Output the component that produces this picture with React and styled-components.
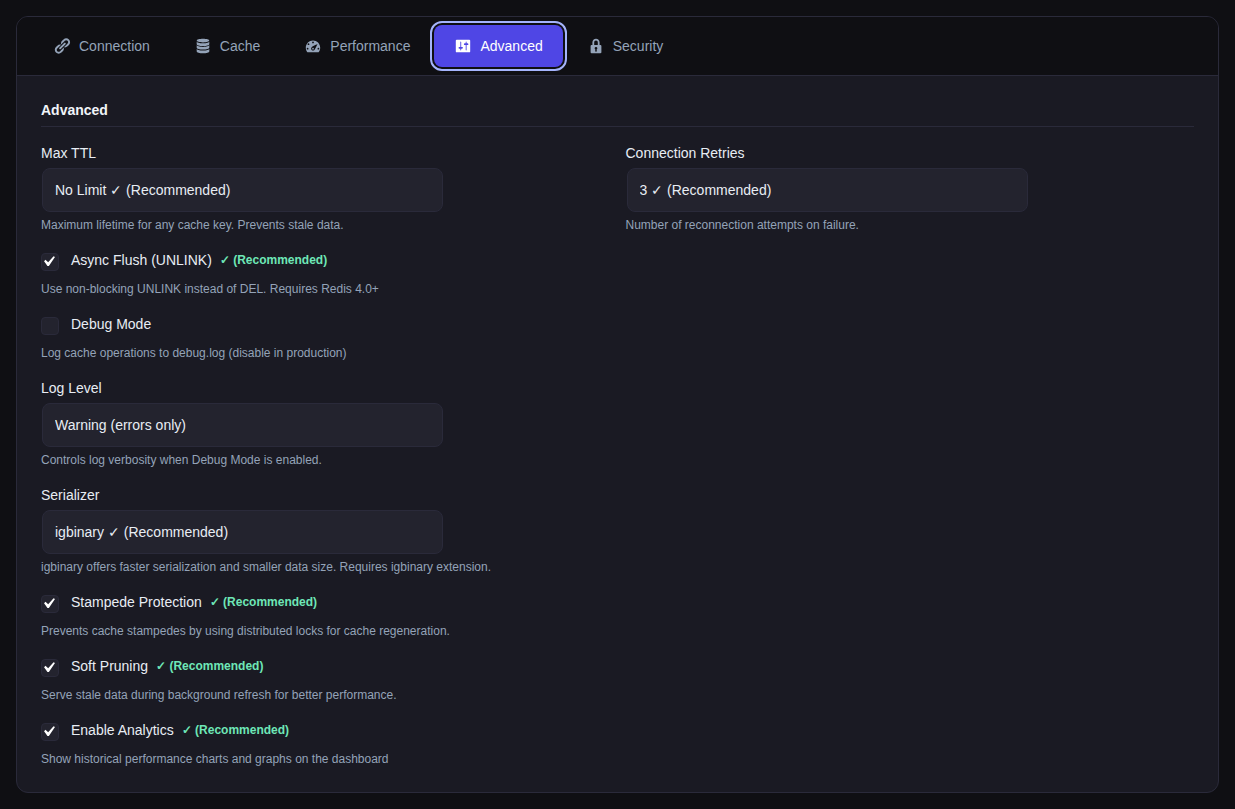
import React, { Fragment, useState } from "react";
import styled, { createGlobalStyle } from "styled-components";

const GlobalStyle = createGlobalStyle`
  * {
    box-sizing: border-box;
  }

  body {
    margin: 0;
    background: #0f0f13;
    color: #e8edf4;
    font-family: "Liberation Sans", Arial, sans-serif;
    font-size: 14px;
    line-height: 20px;
  }
`;

const Card = styled.main`
  margin: 16px;
  background: #1a1a23;
  border: 1px solid #2a2a3a;
  border-radius: 12px;
  overflow: hidden;
`;

const Nav = styled.nav`
  display: flex;
  flex-wrap: wrap;
  gap: 4px;
  padding: 8px 16px;
  background: #0f0f13;
  border-bottom: 1px solid #2a2a3a;
`;

const Tab = styled.button`
  display: inline-flex;
  align-items: center;
  gap: 8px;
  height: 42px;
  padding: 0 20px;
  border: 0;
  border-radius: 8px;
  background: ${({ $active }) => ($active ? "#4f46e5" : "transparent")};
  color: ${({ $active }) => ($active ? "#ffffff" : "#94a3b8")};
  outline: ${({ $active }) => ($active ? "2px solid #a5b4fc" : "none")};
  outline-offset: 2px;
  font: inherit;
  cursor: pointer;
`;

const TabIcon = styled.svg`
  width: 18px;
  height: 18px;
  flex: none;
  fill: currentColor;
`;

const Panel = styled.section`
  padding: 24px;
`;

const Title = styled.h2`
  margin: 0 0 16px;
  padding-bottom: 6px;
  border-bottom: 1px solid #2a2a3a;
  color: #f1f5f9;
  font-size: 14px;
  font-weight: 700;
`;

const Fields = styled.div`
  display: grid;
  grid-template-columns: 1fr 1fr;
  gap: 16px;

  @media (max-width: 768px) {
    grid-template-columns: 1fr;
  }
`;

const Field = styled.div`
  grid-column-start: ${({ $second }) => ($second ? "auto" : "1")};
`;

const Label = styled.label`
  display: block;
`;

const Select = styled.select`
  appearance: none;
  display: block;
  width: 100%;
  max-width: 401px;
  height: 44px;
  margin: 5px 1px 4px;
  padding: 0 12px;
  border: 1px solid #2a2a3a;
  border-radius: 8px;
  background: #23232e;
  color: #e8edf4;
  font: inherit;
`;

const Help = styled.p`
  margin: 0;
  color: #94a3b8;
  font-size: 12px;
  line-height: 18px;
`;

const CheckRow = styled.label`
  display: flex;
  align-items: flex-start;
  margin-bottom: 9px;
`;

const Checkbox = styled.input`
  appearance: none;
  flex: none;
  width: 18px;
  height: 18px;
  margin: 3px 12px 0 0;
  border: 1px solid #2a2a3a;
  border-radius: 4px;
  background: #23232e;

  &:checked {
    background: #23232e
      url("data:image/svg+xml,%3Csvg xmlns='http://www.w3.org/2000/svg' viewBox='0 0 20 20'%3E%3Cpath d='M14.83 4.89l1.34.94-5.81 8.38H9.02L5.78 9.67l1.34-1.25 2.57 2.4z' fill='%23fff'/%3E%3C/svg%3E")
      -4px -3px / 21px 21px no-repeat;
  }
`;

const Badge = styled.span`
  margin-left: 8px;
  color: #6ee7b7;
  font-size: 12px;
  font-weight: 700;
`;

const tabs = [
  {
    name: "Connection",
    path: "M17.74 2.76c1.68 1.69 1.68 4.41 0 6.1l-1.53 1.52c-1.12 1.12-2.7 1.47-4.14 1.09l2.62-2.61.76-.77.76-.76c.84-.84.84-2.2 0-3.04-.84-.85-2.2-.85-3.04 0l-.77.76-3.38 3.38c-.37-1.44-.02-3.02 1.1-4.14l1.52-1.53c1.69-1.68 4.42-1.68 6.1 0zM8.59 13.43l5.34-5.34c.42-.42.42-1.1 0-1.52-.44-.43-1.13-.39-1.53 0l-5.33 5.34c-.42.42-.42 1.1 0 1.52.44.43 1.13.39 1.52 0zm-.76 2.29l4.14-4.15c.38 1.44.03 3.02-1.09 4.14l-1.52 1.53c-1.69 1.68-4.41 1.68-6.1 0-1.68-1.68-1.68-4.42 0-6.1l1.53-1.52c1.12-1.12 2.7-1.47 4.14-1.1l-4.14 4.15c-.85.84-.85 2.2 0 3.05.84.84 2.2.84 3.04 0z",
  },
  {
    name: "Cache",
    path: "M10 6c3.9 0 7-.9 7-2s-3.1-2-7-2-7 .9-7 2 3.1 2 7 2zm0 9c-3.9 0-7-.9-7-2v3c0 1.1 3.1 2 7 2s7-.9 7-2v-3c0 1.1-3.1 2-7 2zm0-4c-3.9 0-7-.9-7-2v3c0 1.1 3.1 2 7 2s7-.9 7-2V9c0 1.1-3.1 2-7 2zm0-4c-3.9 0-7-.9-7-2v3c0 1.1 3.1 2 7 2s7-.9 7-2V5c0 1.1-3.1 2-7 2z",
  },
  {
    name: "Performance",
    path: "M3.76 17.01h12.48C17.34 15.63 18 13.9 18 12c0-4.41-3.58-8-8-8s-8 3.59-8 8c0 1.9.66 3.63 1.76 5.01zM9 6c0-.55.45-1 1-1s1 .45 1 1c0 .56-.45 1-1 1s-1-.44-1-1zM4 8c0-.55.45-1 1-1s1 .45 1 1c0 .56-.45 1-1 1s-1-.44-1-1zm4.52 3.4c.84-.83 6.51-3.5 6.51-3.5s-2.66 5.68-3.49 6.51c-.84.84-2.18.84-3.02 0-.83-.83-.83-2.18 0-3.01zM3 13c0-.55.45-1 1-1s1 .45 1 1c0 .56-.45 1-1 1s-1-.44-1-1zm6 0c0-.55.45-1 1-1s1 .45 1 1c0 .56-.45 1-1 1s-1-.44-1-1zm6 0c0-.55.45-1 1-1s1 .45 1 1c0 .56-.45 1-1 1s-1-.44-1-1z",
  },
  {
    name: "Advanced",
    path: "M18 16V4c0-.55-.45-1-1-1H3c-.55 0-1 .45-1 1v12c0 .55.45 1 1 1h14c.55 0 1-.45 1-1zM8 11h1c.55 0 1 .45 1 1s-.45 1-1 1H8v1.5c0 .28-.22.5-.5.5s-.5-.22-.5-.5V13H6c-.55 0-1-.45-1-1s.45-1 1-1h1V5.5c0-.28.22-.5.5-.5s.5.22.5.5V11zm5-2h-1c-.55 0-1-.45-1-1s.45-1 1-1h1V5.5c0-.28.22-.5.5-.5s.5.22.5.5V7h1c.55 0 1 .45 1 1s-.45 1-1 1h-1v5.5c0 .28-.22.5-.5.5s-.5-.22-.5-.5V9z",
  },
  {
    name: "Security",
    path: "M14 9h1c.55 0 1 .45 1 1v7c0 .55-.45 1-1 1H5c-.55 0-1-.45-1-1v-7c0-.55.45-1 1-1h1V6c0-2.21 1.79-4 4-4s4 1.79 4 4v3zm-2 0V6c0-1.1-.9-2-2-2s-2 .9-2 2v3h4zm-1 7l-.36-2.15c.51-.24.86-.75.86-1.35 0-.83-.67-1.5-1.5-1.5s-1.5.67-1.5 1.5c0 .6.35 1.11.86 1.35L9 16h2z",
  },
];

const SelectField = ({ id, label, value, help, second }) => (
  <Field $second={second}>
    <Label htmlFor={id}>{label}</Label>
    <Select id={id} defaultValue={value}>
      <option value={value}>{value}</option>
    </Select>
    <Help>{help}</Help>
  </Field>
);

const CheckField = ({ id, label, help, checked, recommended }) => (
  <Field>
    <CheckRow htmlFor={id}>
      <Checkbox type="checkbox" id={id} defaultChecked={checked} />
      <span>{label}</span>
      {recommended && <Badge>✓ (Recommended)</Badge>}
    </CheckRow>
    <Help>{help}</Help>
  </Field>
);

const App = () => {
  const [active, setActive] = useState("Advanced");

  return (
    <Fragment>
      <GlobalStyle />
      <Card>
        <Nav>
          {tabs.map(({ name, path }) => (
            <Tab
              key={name}
              type="button"
              $active={active === name}
              onClick={() => setActive(name)}
            >
              <TabIcon viewBox="0 0 20 20" aria-hidden="true">
                <path d={path} />
              </TabIcon>
              {name}
            </Tab>
          ))}
        </Nav>
        <Panel>
          <Title>Advanced</Title>
          <Fields>
            <SelectField
              id="max-ttl"
              label="Max TTL"
              value="No Limit ✓ (Recommended)"
              help="Maximum lifetime for any cache key. Prevents stale data."
            />
            <SelectField
              id="retries"
              label="Connection Retries"
              value="3 ✓ (Recommended)"
              help="Number of reconnection attempts on failure."
              second
            />
            <CheckField
              id="async-flush"
              label="Async Flush (UNLINK)"
              help="Use non-blocking UNLINK instead of DEL. Requires Redis 4.0+"
              checked
              recommended
            />
            <CheckField
              id="debug"
              label="Debug Mode"
              help="Log cache operations to debug.log (disable in production)"
            />
            <SelectField
              id="log-level"
              label="Log Level"
              value="Warning (errors only)"
              help="Controls log verbosity when Debug Mode is enabled."
            />
            <SelectField
              id="serializer"
              label="Serializer"
              value="igbinary ✓ (Recommended)"
              help="igbinary offers faster serialization and smaller data size. Requires igbinary extension."
            />
            <CheckField
              id="stampede"
              label="Stampede Protection"
              help="Prevents cache stampedes by using distributed locks for cache regeneration."
              checked
              recommended
            />
            <CheckField
              id="soft-pruning"
              label="Soft Pruning"
              help="Serve stale data during background refresh for better performance."
              checked
              recommended
            />
            <CheckField
              id="analytics"
              label="Enable Analytics"
              help="Show historical performance charts and graphs on the dashboard"
              checked
              recommended
            />
          </Fields>
        </Panel>
      </Card>
    </Fragment>
  );
};

export default App;
